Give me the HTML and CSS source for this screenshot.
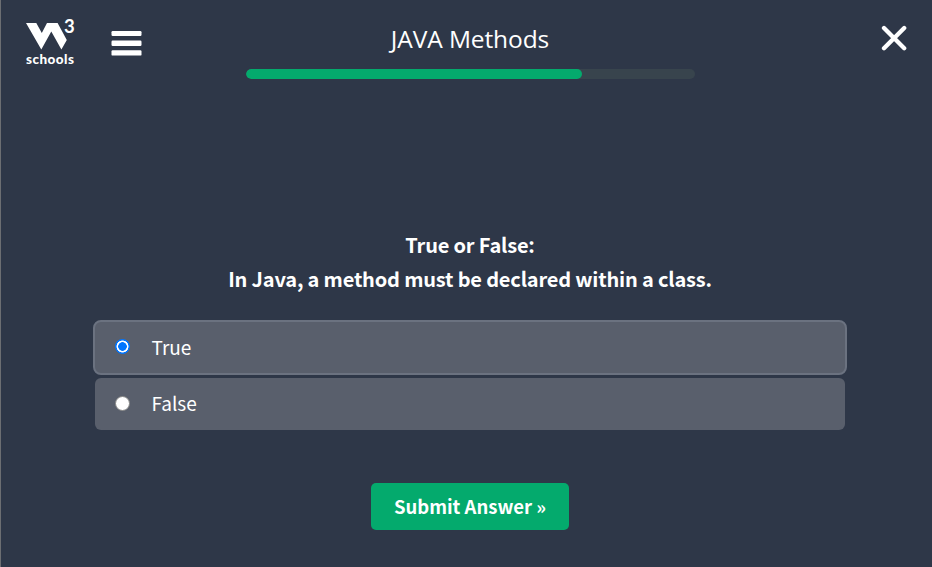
FILE: index.html
```html
<!DOCTYPE html>
<html lang="en">
<head>
<meta charset="utf-8">
<title>JAVA Methods</title>
<link rel="stylesheet" href="styles.css">
</head>
<body>
<header class="top">
  <div class="left">
    <div class="logo">
      <svg width="49" height="32" viewBox="0 0 49 32"><path fill="#fff" d="M0 5h10.3l5.5 10L21 5h10.6l9.2 17-5.4 9.4L25.3 13.5 15.3 31.4z"/></svg>
      <span class="three">3</span>
      <span class="schools">schools</span>
    </div>
    <svg class="burger" width="31" height="25" viewBox="0 0 31 25"><g fill="#fff"><rect x=".5" width="30" height="5" rx="1.2"/><rect x=".5" y="9.5" width="30" height="5.5" rx="1.2"/><rect x=".5" y="19.3" width="30" height="5.3" rx="1.2"/></g></svg>
  </div>
  <div class="center">
    <h1 class="title">JAVA Methods</h1>
    <div class="track"><div class="fill" style="width:74.8%"></div></div>
  </div>
  <svg class="close" width="26" height="26" viewBox="0 0 26 26"><path d="M3 3 23.2 23.2M23.2 3 3 23.2" stroke="#fff" stroke-width="4.3" stroke-linecap="round"/></svg>
</header>
<main class="quiz">
  <p class="question">True or False:<br>In Java, a method must be declared within a class.</p>
  <div class="options">
    <label class="option selected"><span class="radio on"></span><span class="answer">True</span></label>
    <label class="option"><span class="radio"></span><span class="answer">False</span></label>
  </div>
  <button class="submit">Submit Answer »</button>
</main>
</body>
</html>
```
FILE: styles.css
```css
* { box-sizing: border-box; }
body {
  margin: 0;
  height: 567px;
  overflow: hidden;
  border-left: 1px solid #6c6e72;
  background: #2e3748;
  color: #fff;
  font-family: "Noto Sans CJK SC", "Noto Sans", sans-serif;
}
.top {
  display: flex;
  height: 100px;
  padding: 18px 25px 0 25px;
}
.left { display: flex; width: 220px; }
.logo { position: relative; width: 49px; height: 50px; }
.logo svg { display: block; }
.three {
  position: absolute;
  left: 38px;
  top: -1px;
  font: 700 18.5px/19px Lato, sans-serif;
}
.schools {
  display: block;
  margin-top: 2px;
  font: 900 13.5px/15px Lato, sans-serif;
  letter-spacing: 0.45px;
}
.burger { margin: 13px 0 0 36px; }
.center { width: 449px; }
.title {
  margin: 0;
  height: 51px;
  padding-right: 1px;
  text-align: center;
  font: 400 24.5px/42px "Open Sans", sans-serif;
  letter-spacing: -0.1px;
}
.track {
  height: 10px;
  border-radius: 5px;
  background: #38444d;
  overflow: hidden;
}
.fill { height: 100%; border-radius: 5px; background: #04aa6d; }
.close { display: block; margin: 7px 0 0 auto; }
.quiz {
  display: flex;
  flex-direction: column;
  align-items: center;
  padding: 128px 85px 0 92px;
}
.question {
  margin: 0;
  height: 92px;
  text-align: center;
  font-weight: 700;
  font-size: 20px;
  line-height: 34px;
  letter-spacing: -0.18px;
}
.options { width: 754px; }
.option {
  display: flex;
  align-items: center;
  height: 52px;
  margin: 3px 2px 0;
  padding: 0 0 2px 20px;
  border-radius: 6px;
  background: #595f6c;
}
.option.selected {
  height: 55px;
  margin: 0;
  padding-bottom: 3px;
  border: 2px solid #6b7280;
  border-radius: 8px;
}
.radio {
  width: 15px;
  height: 15px;
  border: 1px solid #858585;
  border-radius: 50%;
  background: #fff;
}
.radio.on {
  border: 0;
  background: radial-gradient(circle, #0075ff 0 4px, #fff 4.6px 5.7px, #0075ff 6.3px);
}
.answer { margin-left: 21.5px; font-size: 19px; line-height: 30px; }
.selected .answer { padding-top: 2px; }
.submit {
  width: 198px;
  height: 47px;
  margin: 53px 0 0;
  padding: 0;
  border: 0;
  border-radius: 5px;
  background: #04aa6d;
  color: #fff;
  font: 700 18.5px/47px "Noto Sans CJK SC", sans-serif;
}
```
